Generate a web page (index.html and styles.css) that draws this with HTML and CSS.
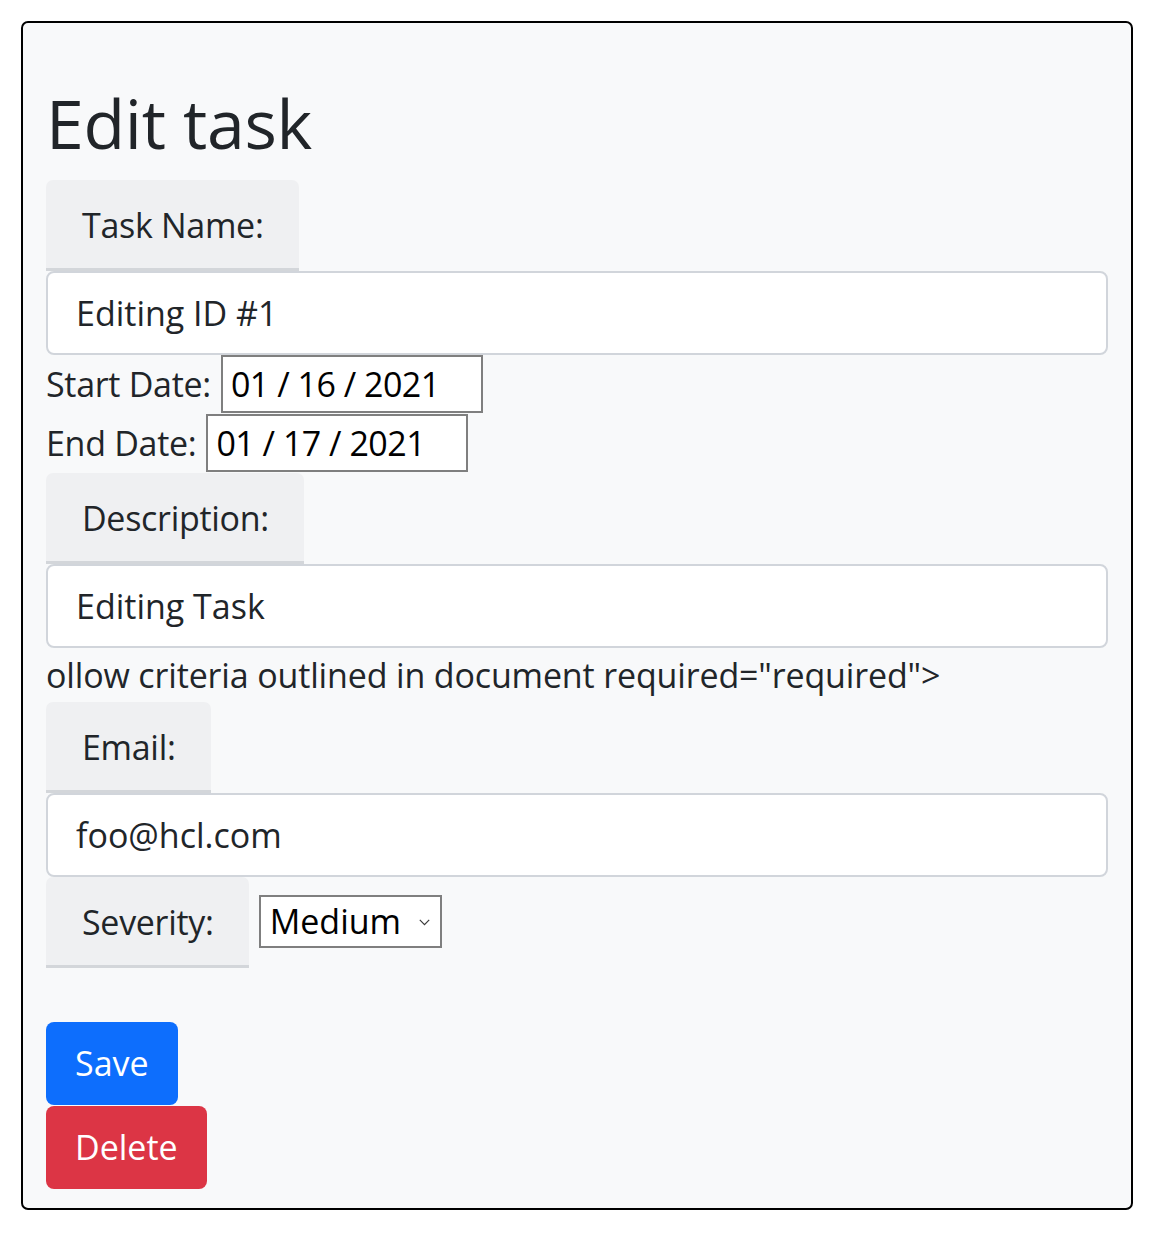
FILE: index.html
```html
<!DOCTYPE html>
<html lang="en">
<head>
<meta charset="utf-8">
<title>Edit task</title>
<link rel="stylesheet" href="styles.css">
</head>
<body>
<div class="card">
  <h1 class="title">Edit task</h1>
  <form class="form">
    <div class="group">
      <label class="group-label" for="name">Task Name:</label>
      <input class="field" id="name" type="text" value="Editing ID #1">
    </div>
    <div class="date-row">
      <span class="date-label">Start Date:</span>
      <input class="date-field" type="text" value="01 / 16 / 2021">
    </div>
    <div class="date-row">
      <span class="date-label">End Date:</span>
      <input class="date-field" type="text" value="01 / 17 / 2021">
    </div>
    <div class="group">
      <label class="group-label" for="desc">Description:</label>
      <input class="field" id="desc" type="text" value="Editing Task">
    </div>
    <p class="stray">ollow criteria outlined in document required="required"&gt;</p>
    <div class="group">
      <label class="group-label" for="email">Email:</label>
      <input class="field" id="email" type="text" value="foo@hcl.com">
    </div>
    <div class="severity-row">
      <label class="group-label">Severity:</label>
      <div class="select">
        <span class="select-value">Medium</span>
        <svg class="chevron" width="11" height="7" viewBox="0 0 11 7" aria-hidden="true"><path d="M0.8 0.8 L5.5 5.6 L10.2 0.8" fill="none" stroke="#3a3a3a" stroke-width="1.2"/></svg>
      </div>
    </div>
    <div class="actions">
      <button type="button" class="btn btn-save">Save</button>
      <button type="button" class="btn btn-delete">Delete</button>
    </div>
  </form>
</div>
</body>
</html>
```

FILE: styles.css
```css
html, body {
  margin: 0;
  padding: 0;
  background: #ffffff;
}

body {
  font-family: "Open Sans", "Noto Sans", sans-serif;
  font-size: 34px;
  line-height: 54px;
  color: #212529;
}

.card {
  margin: 21px 22px 0 21px;
  border: 2px solid #000000;
  border-radius: 7px;
  background: #f8f9fa;
  padding: 0 23px 19px 23px;
}

.title {
  margin: 57px 0 14px 0;
  font-size: 68px;
  line-height: 86px;
  font-weight: 400;
  color: #212529;
  letter-spacing: -0.3px;
}

.form {
  margin: 0;
}

.group {
  display: flex;
  flex-direction: column;
  align-items: flex-start;
}

.group-label {
  display: block;
  box-sizing: content-box;
  height: 86px;
  line-height: 86px;
  padding: 2px 35px 0 36px;
  background: #eff0f2;
  border-bottom: 3px solid #d3d6da;
  border-radius: 7px 7px 0 0;
  color: #212529;
  letter-spacing: -0.3px;
}

.field {
  display: block;
  box-sizing: border-box;
  width: 100%;
  height: 84px;
  margin: 0;
  padding: 0 28px;
  border: 2px solid #d1d5db;
  border-radius: 8px;
  background: #ffffff;
  font-family: inherit;
  font-size: 34px;
  color: #212529;
  outline: none;
}

.date-row {
  display: flex;
  align-items: flex-start;
  gap: 10px;
  height: 59px;
}

.date-label {
  line-height: 58px;
  letter-spacing: -0.3px;
}

.date-field {
  box-sizing: border-box;
  width: 262px;
  height: 58px;
  margin: 0;
  padding: 0 8px;
  border: 2px solid #7f7f7f;
  border-radius: 0;
  background: #ffffff;
  font-family: inherit;
  font-size: 34px;
  letter-spacing: -0.5px;
  color: #000000;
  outline: none;
}

.stray {
  margin: 0;
  line-height: 54px;
  letter-spacing: -0.15px;
}

.severity-row {
  display: flex;
  align-items: center;
  gap: 10px;
}

.select {
  box-sizing: border-box;
  width: 183px;
  height: 53px;
  margin-top: -3px;
  padding: 0 10px 0 9px;
  border: 2px solid #7f7f7f;
  background: #ffffff;
  display: flex;
  align-items: center;
  justify-content: space-between;
  color: #000000;
}

.select-value {
  line-height: 49px;
}

.chevron {
  display: block;
  margin-top: 2px;
}

.actions {
  margin-top: 54px;
  display: flex;
  flex-direction: column;
  align-items: flex-start;
  gap: 1px;
}

.btn {
  height: 83px;
  margin: 0;
  padding: 0 29px;
  border: none;
  border-radius: 8px;
  font-family: inherit;
  font-size: 34px;
  line-height: 83px;
  color: #ffffff;
  cursor: pointer;
}

.btn-save {
  background: #0d6efd;
}

.btn-delete {
  background: #dc3545;
}
```
